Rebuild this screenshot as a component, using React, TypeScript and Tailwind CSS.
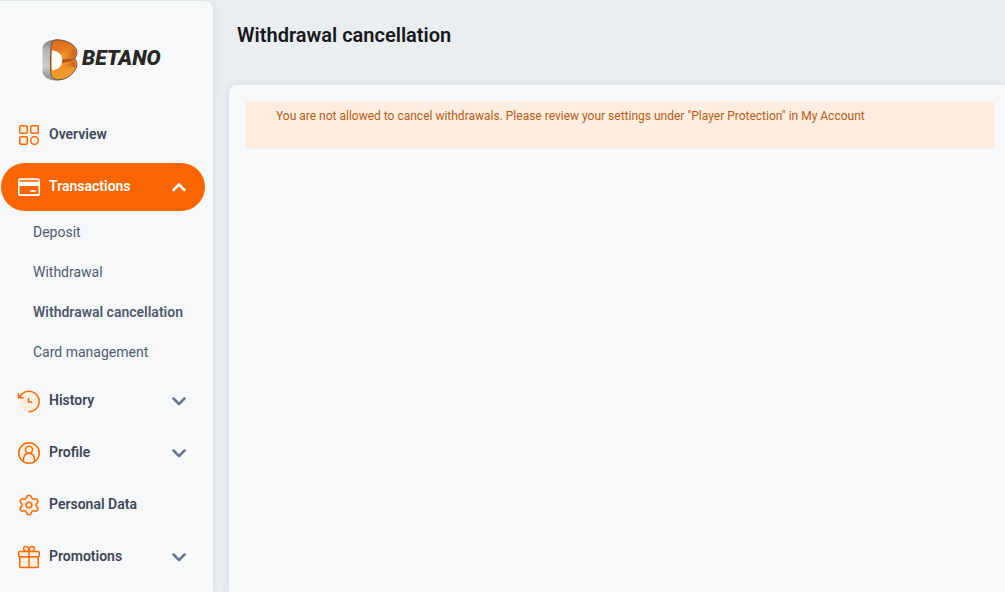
import React, { useState } from 'react';

const BetanoMark: React.FC = () => (
  <svg className="w-9 h-[42px] shrink-0" viewBox="0 0 36 42" aria-hidden="true">
    <defs>
      <linearGradient id="steel" x1="0" y1="0" x2="0" y2="1">
        <stop offset="0" stopColor="#77797b" />
        <stop offset="0.25" stopColor="#b4b6b8" />
        <stop offset="0.65" stopColor="#c9cbcc" />
        <stop offset="1" stopColor="#858789" />
      </linearGradient>
      <linearGradient id="amber" x1="0.3" y1="0" x2="0.5" y2="1">
        <stop offset="0" stopColor="#dd6a1a" />
        <stop offset="0.5" stopColor="#ee8a26" />
        <stop offset="1" stopColor="#f5a02c" />
      </linearGradient>
      <linearGradient id="wedge" x1="0" y1="0" x2="1" y2="0">
        <stop offset="0" stopColor="#f7a735" />
        <stop offset="1" stopColor="#cf5f18" />
      </linearGradient>
    </defs>
    <path d="M15 0.500C6 1 0.500 4 0.500 9v23c0 5.500 5 9 13 9.500 3 0 6-.5 8-1.500L16 1z" fill="url(#steel)" />
    <path
      d="M15 0.800C24 0.800 33 5 34.800 12c.5 3-.5 5.500-2 7.500 2 2.500 2.600 5.500 1.700 8.500C31.500 35.500 24 41 16 40.800c-4.500-.3-6.800-3-7.200-7.300-.6-8-.6-17 .2-25.500.5-4.500 2.500-7.200 6-7.200z"
      fill="url(#amber)"
      stroke="#6b5142"
      strokeWidth="1"
    />
    <path d="M18 15.500L31.500 9.500c2.500 2.500 2.700 6 .5 9.800L19.500 21z" fill="url(#wedge)" />
    <path d="M19.500 20.500l12.500-1 .3 1.500-12.500 4z" fill="#b04e16" />
    <path d="M19.500 24.500l12.500-3.500c1.500 2.500 1.800 5.500 1 7.500l-14-2z" fill="url(#wedge)" />
    <path d="M10 11.500c4.500 0 8 2.500 9.500 5.500-.4 1.200.8 2 .8 4s-1 3-.8 4.500C18 28.500 14.500 31 10 31.500c-.4-6-.4-14 0-20z" fill="#fff" />
  </svg>
);

type IconProps = { children: React.ReactNode; tint?: string };

const Icon: React.FC<IconProps> = ({ children, tint = '#fdeee2' }) => (
  <svg
    className="w-6 h-6 shrink-0"
    viewBox="0 0 24 24"
    fill={tint}
    stroke="currentColor"
    strokeWidth="1.500"
    strokeLinecap="round"
    strokeLinejoin="round"
    aria-hidden="true"
  >
    {children}
  </svg>
);

const OverviewIcon = () => (
  <Icon>
    <rect x="2.700" y="2.700" width="7.600" height="7.600" rx="1" />
    <rect x="13.700" y="2.700" width="7.600" height="7.600" rx="1" />
    <rect x="2.700" y="13.700" width="7.600" height="7.600" rx="1" />
    <circle cx="17.500" cy="17.500" r="3.900" />
  </Icon>
);

const CardIcon = () => (
  <Icon tint="none">
    <rect x="1.700" y="4" width="20.600" height="16" rx="1.800" fill="#fb8a3c" />
    <path d="M1.700 7h20.600v4H1.700z" fill="currentColor" stroke="none" />
    <path d="M2.400 11h19.200v7.500a1 1 0 0 1-1 1H3.400a1 1 0 0 1-1-1z" fill="#f96500" stroke="none" />
    <path d="M1.700 11v7.200A1.800 1.800 0 0 0 3.500 20h17a1.800 1.800 0 0 0 1.800-1.800V11" />
    <path d="M13.500 16h5" />
  </Icon>
);

const HistoryIcon = () => (
  <Icon>
    <circle cx="12" cy="12.500" r="10.300" stroke="none" />
    <path d="M2.600 8.200A10.300 10.300 0 1 1 12 22.800" fill="none" />
    <path d="M1.500 4.500v4.200h4.600" fill="none" />
    <path d="M1.500 5.500v3.200h3.200z" fill="currentColor" stroke="none" />
    <path d="M11.500 9.500V13h3.200" fill="none" />
  </Icon>
);

const ProfileIcon = () => (
  <Icon>
    <circle cx="12" cy="12" r="10.300" />
    <path d="M6.300 20.200c0-5 2-7.900 5.700-7.900s5.700 2.900 5.700 7.900" />
    <circle cx="12" cy="8.800" r="3.500" />
  </Icon>
);

const GearIcon = () => (
  <Icon>
    <path d="M9.700 3.800c.7-2.200 3.900-2.200 4.600 0l.2.800c.4 1.100 1.500 1.700 2.600 1.500l.9-.2c2.200-.5 3.800 2.200 2.300 3.900l-.6.700c-.8.900-.8 2.100 0 3l.6.700c1.500 1.700-.1 4.400-2.300 3.900l-.9-.2c-1.100-.2-2.200.4-2.600 1.500l-.2.800c-.7 2.200-3.900 2.200-4.600 0l-.2-.8c-.4-1.100-1.500-1.700-2.600-1.500l-.9.200c-2.200.5-3.800-2.200-2.300-3.900l.6-.7c.8-.9.8-2.100 0-3l-.6-.7C2.200 8.100 3.800 5.400 6 5.900l.9.200c1.100.2 2.200-.4 2.600-1.500z" />
    <circle cx="12" cy="12" r="2.800" />
  </Icon>
);

const GiftIcon = () => (
  <Icon>
    <rect x="2.700" y="11.500" width="18.600" height="11" rx="1" />
    <rect x="1.700" y="6.500" width="20.600" height="5.200" rx="1" />
    <path d="M12 6.500v16" />
    <path d="M12 6.500C8 6.500 6.500 5.500 6.500 3.800 6.500 2.400 7.600 1.400 9 1.400c1.800 0 3 2 3 5.100zM12 6.500c4 0 5.500-1 5.500-2.700 0-1.400-1.100-2.400-2.500-2.400-1.800 0-3 2-3 5.100z" />
  </Icon>
);

const Chevron: React.FC<{ up?: boolean }> = ({ up }) => (
  <svg
    className="w-4 h-4 shrink-0"
    viewBox="0 0 16 16"
    fill="none"
    stroke="currentColor"
    strokeWidth="2.600"
    strokeLinecap="round"
    strokeLinejoin="round"
    aria-hidden="true"
  >
    <path d={up ? 'M2.500 11L8 5.500 13.500 11' : 'M2.500 5.500L8 11l5.500-5.500'} />
  </svg>
);

const menu = [
  { label: 'Overview', icon: OverviewIcon, expandable: false },
  {
    label: 'Transactions',
    icon: CardIcon,
    expandable: true,
    items: ['Deposit', 'Withdrawal', 'Withdrawal cancellation', 'Card management'],
  },
  { label: 'History', icon: HistoryIcon, expandable: true },
  { label: 'Profile', icon: ProfileIcon, expandable: true },
  { label: 'Personal Data', icon: GearIcon, expandable: false },
  { label: 'Promotions', icon: GiftIcon, expandable: true },
];

const rowClass = 'flex items-center gap-2 w-full h-12 px-4 rounded-full text-sm font-semibold text-left';

export default function App() {
  const [open, setOpen] = useState('Transactions');
  const current = 'Withdrawal cancellation';

  return (
    <div className="flex min-h-screen bg-[#eaeef1] font-['Roboto',sans-serif]">
      <aside className="w-[213px] shrink-0 mt-px rounded-tr-lg bg-[#f7f8fa] shadow-[0_0_8px_rgba(40,50,60,0.1)]">
        <a href="#" className="flex items-center gap-1 pt-[38px] pl-[42px] text-[#272823]">
          <BetanoMark />
          <span className="text-[21px] leading-6 font-black italic pb-1">BETANO</span>
        </a>

        <nav className="mt-[30px] pl-px pr-2">
          <ul className="flex flex-col gap-1">
            {menu.map(({ label, icon: ItemIcon, expandable, items }) => {
              const active = open === label;
              return (
                <li key={label}>
                  {expandable ? (
                    <button
                      type="button"
                      aria-expanded={active}
                      onClick={() => setOpen(active ? '' : label)}
                      className={`${rowClass} ${active ? 'bg-[#f96500] text-white' : 'text-[#f96b07]'}`}
                    >
                      <ItemIcon />
                      <span className={active ? 'pb-0.5' : 'pb-0.5 text-[#3f465c]'}>{label}</span>
                      <span className={active ? 'ml-auto pr-0.5' : 'ml-auto pr-0.5 text-[#6b7891]'}>
                        <Chevron up={active} />
                      </span>
                    </button>
                  ) : (
                    <a href="#" className={`${rowClass} text-[#f96b07]`}>
                      <ItemIcon />
                      <span className="pb-0.5 text-[#3f465c]">{label}</span>
                    </a>
                  )}

                  {items && active && (
                    <ul className="py-px">
                      {items.map((item) => (
                        <li key={item}>
                          <a
                            href="#"
                            className={`flex items-center h-10 pl-8 text-sm text-[#4f5b70] ${
                              item === current ? 'font-semibold' : ''
                            }`}
                          >
                            {item}
                          </a>
                        </li>
                      ))}
                    </ul>
                  )}
                </li>
              );
            })}
          </ul>
        </nav>
      </aside>

      <main className="flex flex-col flex-1 min-w-0 pl-4">
        <h1 className="px-2 pt-[21px] pb-9 text-xl leading-7 font-semibold text-[#15171c]">Withdrawal cancellation</h1>
        <section className="flex-1 rounded-tl-lg bg-[#f7f8fa] pt-4 pl-4 pr-2.5 shadow-[0_0_8px_rgba(40,50,60,0.1)]">
          <div role="alert" className="min-h-12 rounded bg-[#feeee1] px-[31px] py-[7px] text-xs leading-4 text-[#b85c13]">
            You are not allowed to cancel withdrawals. Please review your settings under "Player Protection" in My Account
          </div>
        </section>
      </main>
    </div>
  );
}
